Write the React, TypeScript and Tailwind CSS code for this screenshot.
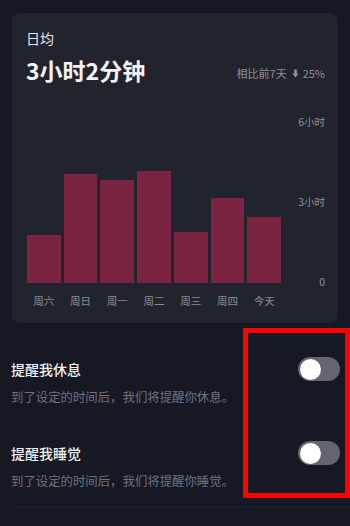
import React from "react";

const bars = [48, 109, 103, 112, 51, 85, 66];
const days = ["周六", "周日", "周一", "周二", "周三", "周四", "今天"];

function Toggle() {
  return (
    <div className="w-[42px] h-[24px] rounded-full bg-[#64656d] flex items-center px-[2px]">
      <div className="w-[21px] h-[21px] rounded-full bg-white" />
    </div>
  );
}

function Row({ title, sub }: { title: string; sub: string }) {
  return (
    <div className="flex items-start justify-between pl-[11px] pr-[10px]">
      <div className="flex flex-col">
        <div className="text-[14px] leading-[20px] font-medium text-[#f0f0f2]">{title}</div>
        <div className="mt-[10px] text-[12.4px] leading-[17px] text-[#70737d]">{sub}</div>
      </div>
      <div className="mt-[-2px]">
        <Toggle />
      </div>
    </div>
  );
}

export default function App() {
  return (
    <div
      className="relative w-[350px] h-[526px] bg-[#161824] overflow-hidden"
      style={{ fontFamily: '"Noto Sans CJK SC", "Noto Sans", sans-serif' }}
    >
      <div className="pt-[13px] px-3">
        <div className="w-[326px] h-[310px] rounded-lg bg-[#22242d] pt-[16px] pl-[14px] pr-[13px]">
          <div className="text-[14px] leading-[18px] text-[#e6e6e8]">日均</div>
          <div className="mt-[8px] flex items-center justify-between">
            <div className="text-[23px] leading-[30px] font-bold text-[#f4f4f6]">3小时2分钟</div>
            <div className="mt-[6px] flex items-center text-[11px] leading-[14px] text-[#8d9099]">
              <span>相比前7天</span>
              <svg width="9" height="9" viewBox="0 0 10 10" className="ml-[4px] mr-[3px]">
                <rect x="3.5" y="0.5" width="3" height="5" fill="#8d9099" />
                <path d="M1.5 5 L8.5 5 L5 9.5 Z" fill="#8d9099" />
              </svg>
              <span>25%</span>
            </div>
          </div>
          <div className="mt-[30px] flex h-[174px]">
            <div className="ml-[1px] w-[254px] h-[168px] grid grid-cols-7 gap-[3px] items-end">
              {bars.map((h, i) => (
                <div key={i} className="bg-[#7a2442]" style={{ height: h }} />
              ))}
            </div>
            <div className="flex-1 flex flex-col justify-between items-end text-[10.5px] leading-[14px] text-[#8d9099]">
              <span>6小时</span>
              <span>3小时</span>
              <span>0</span>
            </div>
          </div>
          <div className="mt-[5px] ml-[1px] w-[254px] grid grid-cols-7 gap-[3px] text-[10.5px] leading-[14px] text-[#8a8d95] text-center">
            {days.map((d) => (
              <span key={d}>{d}</span>
            ))}
          </div>
        </div>
      </div>

      <div className="mt-[36px]">
        <Row title="提醒我休息" sub="到了设定的时间后，我们将提醒你休息。" />
        <div className="h-[37px]" />
        <Row title="提醒我睡觉" sub="到了设定的时间后，我们将提醒你睡觉。" />
      </div>

      <div className="mt-[17px] ml-3 h-px bg-[#20222f]" />

      <div className="absolute left-[243px] top-[328px] w-[107px] h-[170px] border-[5px] border-[#ff0000]" />
    </div>
  );
}
